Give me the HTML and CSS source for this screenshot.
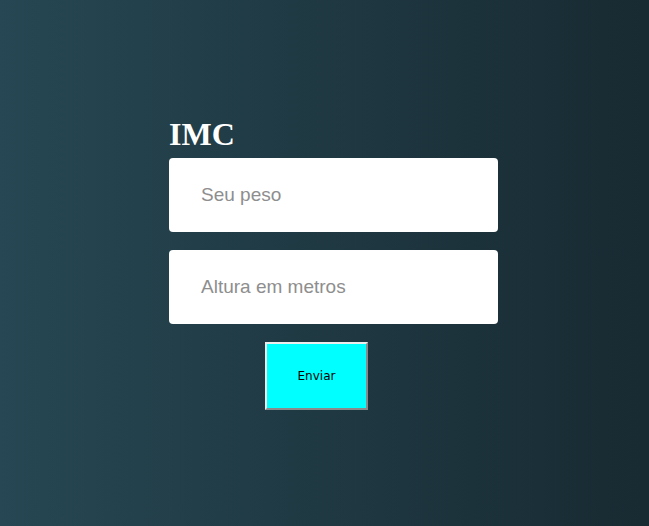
FILE: index.html
```html
<!DOCTYPE html>
<html lang="pt">
<head>
<meta charset="utf-8">
<title>IMC</title>
<link rel="stylesheet" href="styles.css">
</head>
<body>
<main class="page">
  <form class="card">
    <h1 class="title">IMC</h1>
    <input class="field" type="text" placeholder="Seu peso">
    <input class="field" type="text" placeholder="Altura em metros">
    <button class="send" type="button">Enviar</button>
  </form>
</main>
</body>
</html>
```
FILE: styles.css
```css
html, body {
  margin: 0;
  padding: 0;
  height: 100%;
}
body {
  background: linear-gradient(to right, #264753, #182a32);
}
.page {
  height: 100%;
  display: flex;
  align-items: center;
  justify-content: center;
  padding-left: 18px;
  box-sizing: border-box;
}
.card {
  width: 329px;
  display: flex;
  flex-direction: column;
  gap: 18px;
  margin-top: -1px;
}
.title {
  font-family: "Liberation Serif", serif;
  font-size: 32px;
  font-weight: bold;
  color: #ffffff;
  margin: 0 0 -13px 0;
  line-height: 37px;
}
.field {
  box-sizing: border-box;
  width: 329px;
  height: 74px;
  border: none;
  border-radius: 4px;
  background: #ffffff;
  padding: 0 32px;
  font-family: "Liberation Sans", Arial, sans-serif;
  font-size: 19px;
  color: #333;
  outline: none;
}
.field::placeholder {
  color: #8e8e8e;
}
.send {
  align-self: flex-start;
  margin-left: 96px;
  width: 103px;
  height: 68px;
  background: #00ffff;
  border: 2px solid;
  border-color: #ececec #8a8a8a #8a8a8a #ececec;
  font-family: "DejaVu Sans", sans-serif;
  font-size: 12px;
  color: #000;
  padding: 0;
}
```
